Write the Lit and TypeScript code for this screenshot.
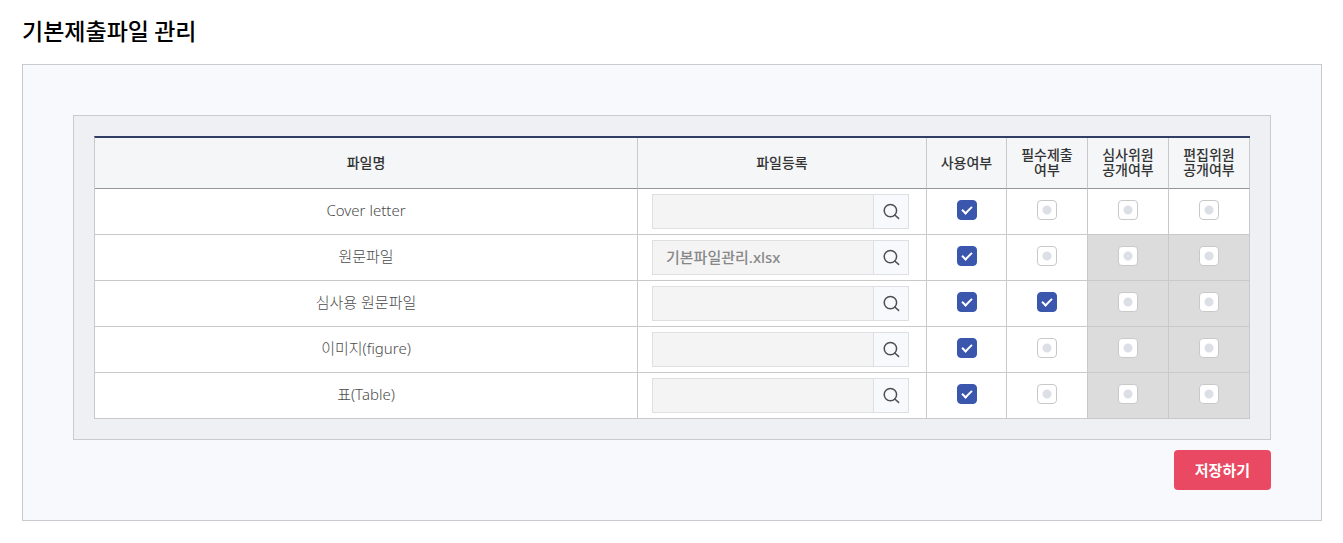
import { LitElement, html, css } from "lit";
import { customElement, state } from "lit/decorators.js";

interface FileRow {
  name: string;
  file: string;
  flags: boolean[];
  locked: boolean;
}

const FLAG_LABELS = ["사용여부", "필수제출여부", "심사위원 공개여부", "편집위원 공개여부"];

@customElement("app-root")
export class AppRoot extends LitElement {
  static styles = css`
    :host {
      display: block;
      box-sizing: border-box;
      padding: 14px 21px 22px 22px;
      background: #fff;
      color: #000;
      font-family: "Noto Sans", "Noto Sans CJK KR", sans-serif;
      font-size: 14px;
    }
    *,
    *::before,
    *::after {
      box-sizing: border-box;
    }
    .title {
      margin: 0 0 18px;
      font-family: "Noto Sans CJK KR", sans-serif;
      font-size: 23px;
      line-height: 32px;
      font-weight: 500;
    }
    .panel {
      display: flex;
      flex-direction: column;
      gap: 10px;
      padding: 50px 50px 30px;
      border: 1px solid #c9cacf;
      background: #f8f9fd;
    }
    .box {
      padding: 20px;
      border: 1px solid #c9cacf;
      background: #eff0f4;
    }
    .grid {
      width: 100%;
      table-layout: fixed;
      border-spacing: 0;
      border-top: 2px solid #303f63;
      border-left: 1px solid #c9c9c9;
      background: #fff;
    }
    .col-file {
      width: 289px;
    }
    .col-use {
      width: 80px;
    }
    .col-flag {
      width: 81px;
    }
    .head {
      height: 51px;
      padding: 0 0 2px;
      border-right: 1px solid #c9c9c9;
      border-bottom: 1px solid #94969b;
      background: #f4f6f8;
      color: #333;
      font-weight: 500;
      line-height: 15px;
    }
    .name,
    .file,
    .flag {
      height: 46px;
      border-right: 1px solid #c9c9c9;
      border-bottom: 1px solid #c9c9c9;
      text-align: center;
    }
    .name {
      padding: 0 0 4px;
      color: #4c4c4c;
      font-size: 15px;
      font-weight: 300;
      line-height: 20px;
    }
    .file {
      padding: 5px 17px 5px 14px;
    }
    .flag {
      padding: 0 0 4px;
    }
    .locked {
      background: #dcdcdc;
    }
    .picker {
      display: flex;
      height: 35px;
      border: 1px solid #dedfe2;
      background: #f4f4f4;
    }
    .path {
      flex: 1;
      min-width: 0;
      padding: 0 13px 2px;
      border: 0;
      outline: 0;
      background: transparent;
      color: #888;
      font: inherit;
      font-size: 15px;
      font-weight: 500;
    }
    .search {
      display: flex;
      align-items: center;
      justify-content: center;
      width: 35px;
      padding: 0;
      border: 0;
      border-left: 1px solid #dedfe2;
      background: #f8f9fd;
      color: #4d4f54;
      cursor: pointer;
    }
    .check {
      appearance: none;
      display: block;
      width: 20px;
      height: 20px;
      margin: 0 auto;
      border: 1px solid #c9c9c9;
      border-radius: 4px;
      background: #fff radial-gradient(circle, #dcdfe6 4px, transparent 5px);
    }
    .check:checked {
      border-color: #3a56ad;
      background: #3a56ad;
    }
    .check:checked::before {
      content: "";
      display: block;
      width: 6px;
      height: 10px;
      margin: 3px auto 0;
      border: solid #fff;
      border-width: 0 2px 2px 0;
      transform: rotate(45deg);
    }
    .save {
      align-self: flex-end;
      height: 40px;
      padding: 0 21px 2px;
      border: 0;
      border-radius: 4px;
      background: #e94962;
      color: #fff;
      font: inherit;
      font-size: 15px;
      font-weight: 700;
      cursor: pointer;
    }
  `;

  @state()
  private rows: FileRow[] = [
    { name: "Cover letter", file: "", flags: [true, false, false, false], locked: false },
    { name: "원문파일", file: "기본파일관리.xlsx", flags: [true, false, false, false], locked: true },
    { name: "심사용 원문파일", file: "", flags: [true, true, false, false], locked: true },
    { name: "이미지(figure)", file: "", flags: [true, false, false, false], locked: true },
    { name: "표(Table)", file: "", flags: [true, false, false, false], locked: true },
  ];

  private renderRow(row: FileRow) {
    return html`
      <tr>
        <td class="name">${row.name}</td>
        <td class="file">
          <div class="picker">
            <input class="path" type="text" readonly aria-label="${row.name} 파일등록" .value=${row.file} />
            <button class="search" type="button" aria-label="${row.name} 파일 찾기">
              <svg width="18" height="18" viewBox="0 0 18 18" fill="none" stroke="currentColor" stroke-width="1.5">
                <circle cx="8.4" cy="7.6" r="6.2" />
                <path d="M12.8 12 16.6 15.4" stroke-linecap="round" />
              </svg>
            </button>
          </div>
        </td>
        ${row.flags.map((on, i) => {
          const locked = row.locked && i > 1;
          return html`<td class="flag ${locked ? "locked" : ""}">
            <input
              class="check"
              type="checkbox"
              aria-label="${row.name} ${FLAG_LABELS[i]}"
              .checked=${on}
              ?disabled=${locked}
            />
          </td>`;
        })}
      </tr>
    `;
  }

  render() {
    return html`
      <h1 class="title">기본제출파일 관리</h1>
      <section class="panel">
        <div class="box">
          <table class="grid">
            <colgroup>
              <col />
              <col class="col-file" />
              <col class="col-use" />
              <col class="col-flag" span="3" />
            </colgroup>
            <thead>
              <tr>
                <th class="head" scope="col">파일명</th>
                <th class="head" scope="col">파일등록</th>
                <th class="head" scope="col">사용여부</th>
                <th class="head" scope="col">필수제출<br />여부</th>
                <th class="head" scope="col">심사위원<br />공개여부</th>
                <th class="head" scope="col">편집위원<br />공개여부</th>
              </tr>
            </thead>
            <tbody>
              ${this.rows.map((row) => this.renderRow(row))}
            </tbody>
          </table>
        </div>
        <button class="save" type="button">저장하기</button>
      </section>
    `;
  }
}
